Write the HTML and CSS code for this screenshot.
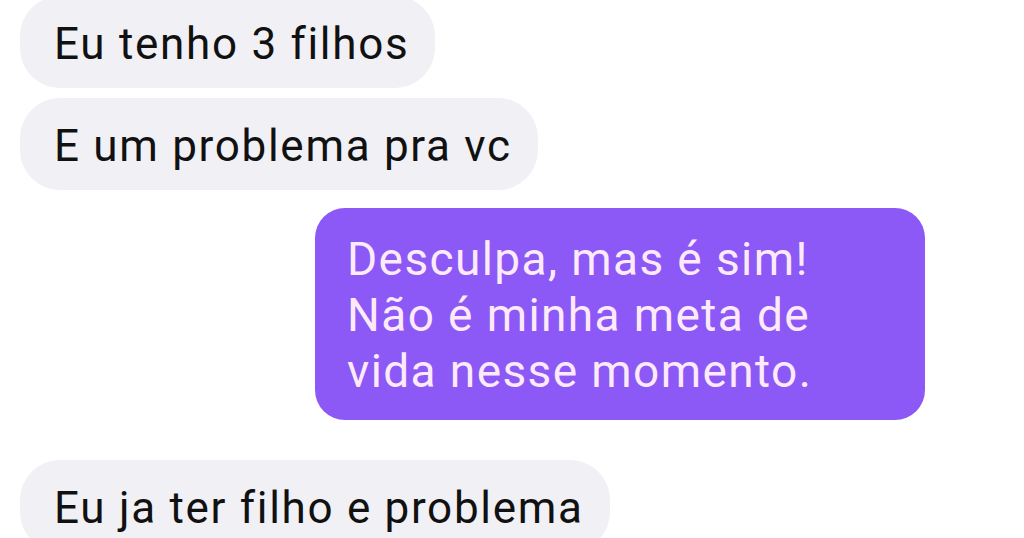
FILE: index.html
```html
<!DOCTYPE html>
<html lang="pt-BR">
<head>
    <meta charset="UTF-8">
    <meta name="viewport" content="width=device-width, initial-scale=1.0">
    <title>Conversa</title>
    <link rel="stylesheet" href="styles.css">
</head>
<body>
    <main class="chat">
        <div class="bubble bubble-in first">Eu tenho 3 filhos</div>
        <div class="bubble bubble-in">E um problema pra vc</div>
        <div class="bubble bubble-out">
            Desculpa, mas é sim!<br>
            Não é minha meta de<br>
            vida nesse momento.
        </div>
        <div class="bubble bubble-in last">Eu ja ter filho e problema</div>
    </main>
</body>
</html>
```

FILE: styles.css
```css
* {
    margin: 0;
    padding: 0;
    box-sizing: border-box;
}

body {
    font-family: Roboto, 'Noto Sans', sans-serif;
    background: #ffffff;
    color: #111;
    overflow: hidden;
    height: 538px;
}

.chat {
    display: flex;
    flex-direction: column;
    align-items: flex-start;
    padding-left: 20px;
}

.bubble {
    line-height: 56px;
    white-space: nowrap;
    font-variant-ligatures: none;
}

.bubble-in {
    font-size: 44px;
    letter-spacing: 1.7px;
    background: #f0f0f5;
    border-radius: 40px;
    padding: 20px 26px 16px 34px;
    margin-bottom: 10px;
}

.bubble-in.first {
    margin-top: -4px;
}

.bubble-out {
    font-size: 46px;
    letter-spacing: 1.4px;
    align-self: flex-end;
    margin-right: 99px;
    margin-top: 8px;
    margin-bottom: 40px;
    width: 610px;
    background: #8c58f6;
    color: #fdeaf8;
    border-radius: 30px;
    padding: 23px 32px 21px;
}
```
